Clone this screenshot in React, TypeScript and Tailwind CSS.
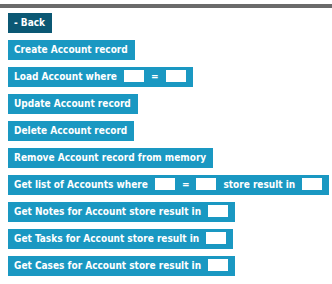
import React from "react";

const font = { fontFamily: '"DejaVu Sans Condensed", "DejaVu Sans", Verdana, sans-serif' };

function Box() {
  return <span className="mt-[3px] inline-block h-[12px] w-[20px] shrink-0 bg-white" />;
}

function Btn({ children, dark }: { children: React.ReactNode; dark?: boolean }) {
  return (
    <div
      className={`flex h-[20px] shrink-0 items-start gap-[7px] whitespace-nowrap pl-[6px] pr-[7px] text-[10px] font-bold leading-[20px] text-white ${
        dark ? "bg-[#0b5874]" : "bg-[#1a98c2]"
      }`}
    >
      {children}
    </div>
  );
}

export default function App() {
  return (
    <div className="h-[284px] w-[332px] overflow-hidden bg-white" style={font}>
      <div className="h-[4px]" />
      <div className="h-[4px] w-full bg-[#6b6b6b]" />
      <div className="flex flex-col items-start gap-[7px] pl-[8px] pt-[5px]">
        <Btn dark>- Back</Btn>
        <Btn>Create Account record</Btn>
        <Btn>
          <span>Load Account where</span>
          <Box />
          <span>=</span>
          <Box />
        </Btn>
        <Btn>Update Account record</Btn>
        <Btn>Delete Account record</Btn>
        <Btn>Remove Account record from memory</Btn>
        <Btn>
          <span>Get list of Accounts where</span>
          <Box />
          <span>=</span>
          <Box />
          <span>store result in</span>
          <Box />
        </Btn>
        <Btn>
          <span>Get Notes for Account store result in</span>
          <Box />
        </Btn>
        <Btn>
          <span>Get Tasks for Account store result in</span>
          <Box />
        </Btn>
        <Btn>
          <span>Get Cases for Account store result in</span>
          <Box />
        </Btn>
      </div>
    </div>
  );
}
